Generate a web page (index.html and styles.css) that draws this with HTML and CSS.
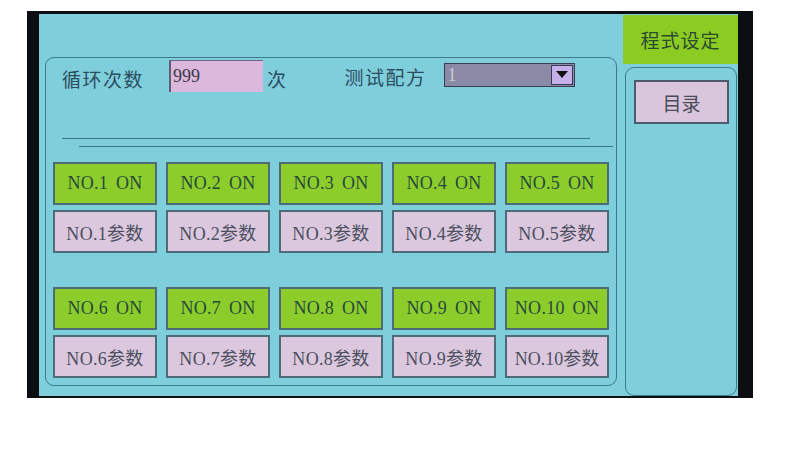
FILE: index.html
```html
<!DOCTYPE html>
<html lang="zh-CN">
<head>
    <meta charset="UTF-8">
    <meta name="viewport" content="width=device-width, initial-scale=1.0">
    <title>程式设定</title>
    <link rel="stylesheet" href="styles.css">
</head>
<body>

    <div class="device">
        <div class="screen">

            <!-- Main settings panel -->
            <div class="main-panel">
                <div class="top-row">
                    <span class="label">循环次数</span>
                    <div class="num-input">999</div>
                    <span class="label unit">次</span>
                    <span class="label recipe-label">测试配方</span>
                    <div class="select-box">
                        <span class="select-value">1</span>
                        <span class="select-arrow"></span>
                    </div>
                </div>

                <div class="rule rule-top"></div>
                <div class="rule rule-bottom"></div>

                <div class="channel-group">
                    <div class="btn btn-on">NO.1 ON</div>
                    <div class="btn btn-on">NO.2 ON</div>
                    <div class="btn btn-on">NO.3 ON</div>
                    <div class="btn btn-on">NO.4 ON</div>
                    <div class="btn btn-on">NO.5 ON</div>
                    <div class="btn btn-param">NO.1参数</div>
                    <div class="btn btn-param">NO.2参数</div>
                    <div class="btn btn-param">NO.3参数</div>
                    <div class="btn btn-param">NO.4参数</div>
                    <div class="btn btn-param">NO.5参数</div>
                </div>

                <div class="channel-group second">
                    <div class="btn btn-on">NO.6 ON</div>
                    <div class="btn btn-on">NO.7 ON</div>
                    <div class="btn btn-on">NO.8 ON</div>
                    <div class="btn btn-on">NO.9 ON</div>
                    <div class="btn btn-on">NO.10 ON</div>
                    <div class="btn btn-param">NO.6参数</div>
                    <div class="btn btn-param">NO.7参数</div>
                    <div class="btn btn-param">NO.8参数</div>
                    <div class="btn btn-param">NO.9参数</div>
                    <div class="btn btn-param narrow">NO.10参数</div>
                </div>
            </div>

            <!-- Right side: page title and menu -->
            <div class="side">
                <div class="page-title">程式设定</div>
                <div class="side-panel">
                    <div class="menu-btn">目录</div>
                </div>
            </div>

        </div>
    </div>

</body>
</html>
```

FILE: styles.css
```css
body {
    margin: 0;
    padding: 0;
    background-color: #fff;
    font-family: "Liberation Serif", "Noto Sans CJK SC", serif;
}

.device {
    width: 726px;
    height: 387px;
    margin: 11px 0 0 27px;
    background-color: #0b0f12;
    padding: 3px 15px 2px 12px;
    box-sizing: border-box;
}

.screen {
    display: flex;
    height: 382px;
    background-color: #7ecedc;
    padding-left: 6px;
    box-sizing: border-box;
}

/* main panel */

.main-panel {
    width: 572px;
    height: 329px;
    margin-top: 43px;
    border: 1px solid #3d7a8a;
    border-radius: 9px;
    box-sizing: border-box;
}

.top-row {
    display: flex;
    align-items: center;
    height: 32px;
    margin-top: 2px;
    padding-left: 16px;
}

.label {
    font-family: "Noto Sans CJK SC", sans-serif;
    font-size: 19px;
    letter-spacing: 1.5px;
    color: #2c4d5c;
    position: relative;
    top: 2px;
}

.num-input {
    width: 94px;
    height: 32px;
    margin-left: 25px;
    background-color: #dcb9dc;
    border-left: 2px solid #5c5f78;
    border-top: 1px solid #6a6a88;
    box-sizing: border-box;
    font-size: 18px;
    line-height: 31px;
    padding-left: 2px;
    color: #3a3a4a;
}

.unit {
    margin-left: 4px;
}

.recipe-label {
    margin-left: 57px;
    top: 0;
}

.select-box {
    display: flex;
    justify-content: space-between;
    width: 131px;
    height: 24px;
    margin-left: 17px;
    margin-top: -2px;
    background-color: #8b8aa6;
    border: 1px solid #3b3b52;
    box-sizing: border-box;
}

.select-value {
    color: #c9c9d9;
    font-size: 18px;
    line-height: 22px;
    padding-left: 3px;
}

.select-arrow {
    width: 22px;
    height: 20px;
    margin: 1px;
    background-color: #c6b0ea;
    border: 1px solid #3a3a56;
    box-sizing: border-box;
    position: relative;
}

.select-arrow::after {
    content: "";
    position: absolute;
    left: 4px;
    top: 5px;
    border-left: 6px solid transparent;
    border-right: 6px solid transparent;
    border-top: 7px solid #111;
}

.rule {
    height: 0;
    border-top: 1px solid #3a7585;
}

.rule-top {
    margin: 46px 0 0 16px;
    width: 528px;
}

.rule-bottom {
    margin: 7px 0 0 33px;
    width: 534px;
}

/* channel buttons */

.channel-group {
    display: grid;
    grid-template-columns: repeat(5, 104px);
    grid-auto-rows: 43px;
    column-gap: 9px;
    row-gap: 5px;
    margin: 15px 0 0 7px;
}

.channel-group.second {
    margin-top: 34px;
}

.btn {
    display: flex;
    align-items: center;
    justify-content: center;
    border: 2px solid #4e6b78;
    box-sizing: border-box;
    font-size: 18px;
    letter-spacing: 0.3px;
    word-spacing: 3px;
}

.btn-on {
    background-color: #8ccd2c;
    color: #27493a;
}

.btn-param {
    background-color: #dcc8de;
    color: #4b4f60;
}

.btn-param.narrow {
    letter-spacing: 0;
}

/* side column */

.side {
    display: flex;
    flex-direction: column;
    width: 115px;
    margin-left: 6px;
}

.page-title {
    height: 49px;
    margin-top: 1px;
    background-color: #8ccb22;
    color: #2a4a30;
    font-family: "Noto Sans CJK SC", sans-serif;
    font-size: 19px;
    letter-spacing: 1px;
    display: flex;
    align-items: center;
    justify-content: center;
}

.side-panel {
    flex: 1;
    margin: 3px 1px 0 2px;
    border: 1px solid #3d7a8a;
    border-radius: 9px;
}

.menu-btn {
    width: 95px;
    height: 44px;
    margin: 12px 0 0 8px;
    background-color: #d9c6dc;
    border: 2px solid #4e5a6e;
    box-sizing: border-box;
    color: #4a4a58;
    font-family: "Noto Sans CJK SC", sans-serif;
    font-size: 19px;
    display: flex;
    align-items: center;
    justify-content: center;
}
```
